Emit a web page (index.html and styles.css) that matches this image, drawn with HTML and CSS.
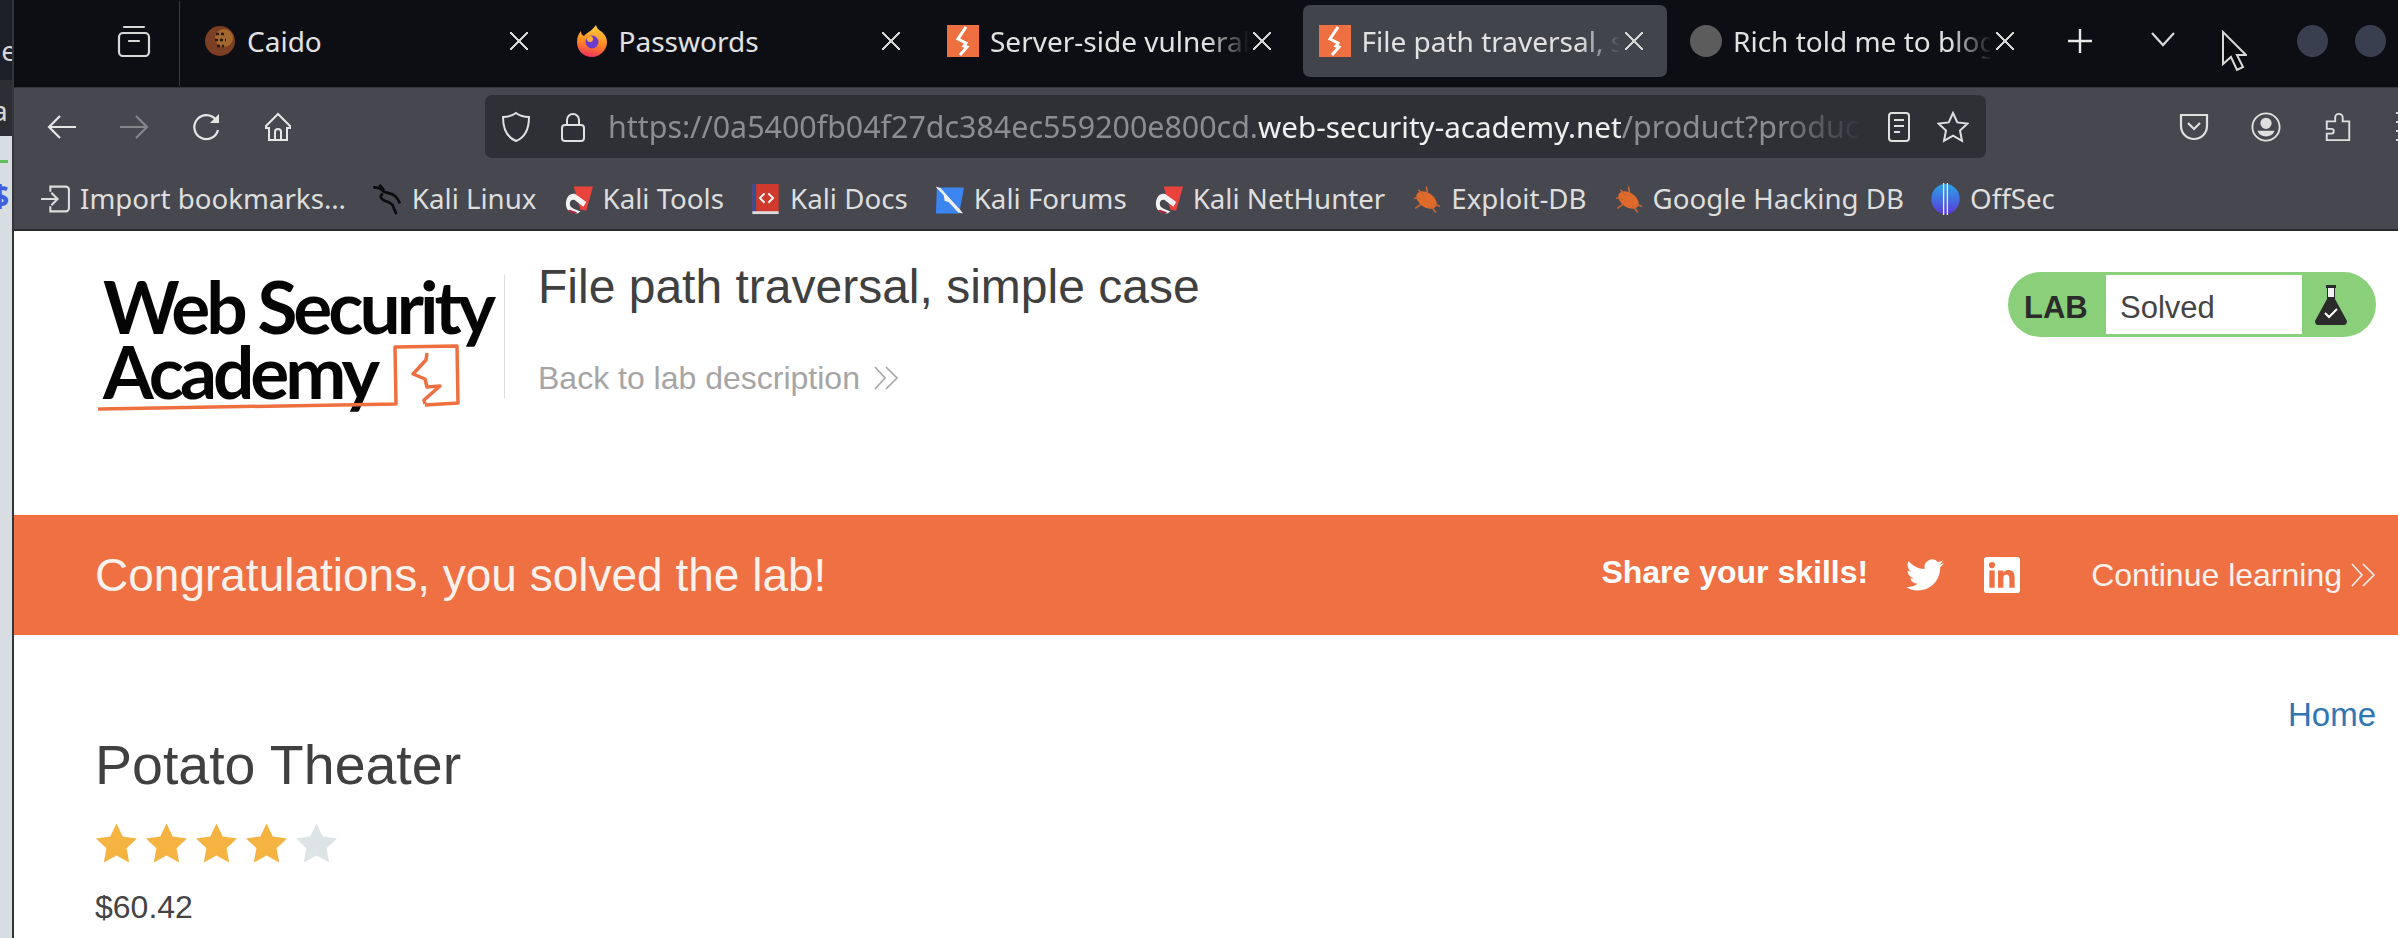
FILE: index.html
```html
<!DOCTYPE html>
<html lang="en">

<head>
    <meta charset="UTF-8">
    <title>File path traversal, simple case</title>
    <link rel="stylesheet" href="styles.css">
</head>

<body>
    <svg class="sprites" width="0" height="0">
        <symbol id="burp" viewBox="0 0 32 32">
            <rect width="32" height="32" fill="#ee7040" />
            <path d="M19 2l-8 12 8 4-2 3 3 1-7 8" fill="none" stroke="#fff" stroke-width="3" />
        </symbol>
        <symbol id="kalired" viewBox="0 0 32 32">
            <path d="M11 3l20 0-7 25-6-1z" fill="#e8433d" />
            <path d="M3 21c0-8 5-12 10-10l11 8-3 5-9-7c-3-1-5 1-5 4 0 3 2 4 4 5l7 3-3 2-6-1c-4-1-6-5-6-9z" fill="#f2f2f2" />
            <path d="M5 28l5 3 5-1-8-3z" fill="#a8243d" />
        </symbol>
        <symbol id="bug" viewBox="0 0 30 30">
            <ellipse cx="15" cy="16" rx="11" ry="7" fill="#e06a2c" transform="rotate(35 15 16)" />
            <path d="M7 6l6 6M3 14l7 1M4 24l6-4M24 28l-5-7M15 3l1 7M28 22l-6-2" stroke="#c9682f" stroke-width="1.5" />
        </symbol>
        <symbol id="chevrons" viewBox="0 0 26 26">
            <path d="M2 2l10 11L2 24M13 2l11 11-11 11" fill="none" stroke="currentColor" stroke-width="1.6" />
        </symbol>
        <symbol id="star" viewBox="0 0 42 40">
            <path d="M21 0l6.4 13.4L42 15.3 31.3 25.4 34 40 21 32.9 8 40l2.7-14.6L0 15.3l14.6-1.9z" fill="currentColor" />
        </symbol>
    </svg>

    <div class="desktop-edge">
        <div class="edge-dark"><span>le</span></div>
        <div class="edge-mid"><span>a</span></div>
        <div class="edge-light">
            <div class="edge-green"></div>
            <span>$</span>
        </div>
    </div>

    <div class="browser">
        <div class="tabbar">
            <svg class="tabs-list" viewBox="0 0 34 32" fill="none" stroke="#d8d8d8" stroke-width="2.2">
                <rect x="2" y="8" width="30" height="23" rx="4" />
                <path d="M7 2h20M12 16h10" stroke-linecap="round" />
            </svg>
            <div class="tab-divider"></div>

            <div class="tab">
                <svg class="favicon" viewBox="0 0 32 32">
                    <circle cx="16" cy="16" r="15" fill="#7b3f25" />
                    <circle cx="20" cy="13" r="9" fill="#a4672f" />
                    <path d="M12 9h9M11 15h11M13 21h7" stroke="#2b1a12" stroke-width="2.5" stroke-dasharray="3 2" />
                </svg>
                <span class="tab-title">Caido</span>
                <span class="tab-close"></span>
            </div>
            <div class="tab">
                <svg class="favicon" viewBox="0 0 32 32">
                    <defs>
                        <linearGradient id="fox" x1="0.6" y1="0" x2="0.4" y2="1">
                            <stop offset="0" stop-color="#ffd23f" />
                            <stop offset="0.55" stop-color="#ff8a1f" />
                            <stop offset="1" stop-color="#f0325f" />
                        </linearGradient>
                    </defs>
                    <path d="M20 0c1 4 3 5 6 7 4 4 5 7 5 10 0 8-7 15-15 15S1 26 1 17c0-4 1-8 4-11 0 3 1 4 3 5 2-3 7-4 12-11z" fill="url(#fox)" />
                    <circle cx="16" cy="17" r="6.5" fill="#6d3bd0" />
                    <circle cx="14" cy="14" r="3" fill="#ffb02e" />
                </svg>
                <span class="tab-title">Passwords</span>
                <span class="tab-close"></span>
            </div>
            <div class="tab">
                <svg class="favicon"><use href="#burp" /></svg>
                <span class="tab-title fade">Server-side vulnerabilities</span>
                <span class="tab-close"></span>
            </div>
            <div class="tab active">
                <svg class="favicon"><use href="#burp" /></svg>
                <span class="tab-title fade">File path traversal, simple case</span>
                <span class="tab-close"></span>
            </div>
            <div class="tab">
                <span class="favicon favicon-grey"></span>
                <span class="tab-title fade">Rich told me to blog about it</span>
                <span class="tab-close"></span>
            </div>

            <svg class="tab-plus" viewBox="0 0 26 26" stroke="#e8e8e8" stroke-width="2.4">
                <path d="M13 1v24M1 13h24" />
            </svg>
            <svg class="tab-more" viewBox="0 0 26 16" fill="none" stroke="#d8d8d8" stroke-width="2.2">
                <path d="M2 2l11 12L24 2" />
            </svg>
            <div class="win-buttons">
                <span class="win-dot"></span>
                <span class="win-dot"></span>
            </div>
            <svg class="cursor" viewBox="0 0 26 42">
                <path d="M2 2v32l8-7 6 13 6-3-6-12h9z" fill="#0a0a0c" stroke="#d8d8d8" stroke-width="2" />
            </svg>
        </div>

        <div class="toolbar">
            <div class="nav-buttons">
                <svg class="tool-icon" viewBox="0 0 30 30" fill="none" stroke="#e6e6e6" stroke-width="2.2">
                    <path d="M29 15H3M13 4L2 15l11 11" />
                </svg>
                <svg class="tool-icon" viewBox="0 0 30 30" fill="none" stroke="#85868a" stroke-width="2.2">
                    <path d="M1 15h26M17 4l11 11-11 11" />
                </svg>
                <svg class="tool-icon" viewBox="0 0 30 30" fill="none" stroke="#e6e6e6" stroke-width="2.2">
                    <path d="M25 8A12 12 0 1 0 27 18" />
                    <path d="M28 2v9h-9z" fill="#e6e6e6" stroke="none" />
                </svg>
                <svg class="tool-icon" viewBox="0 0 30 30" fill="none" stroke="#e6e6e6" stroke-width="2">
                    <path d="M15 2L3 14v2h3v12h18V16h3v-2zM12 28v-8a3 3 0 0 1 6 0v8" />
                </svg>
            </div>
            <div class="urlbar">
                <svg class="url-icon" viewBox="0 0 30 32" fill="none" stroke="#e0e0e0" stroke-width="2">
                    <path d="M15 2c4 3 8 4 13 4 0 11-3 20-13 24C5 26 2 17 2 6c5 0 9-1 13-4z" />
                </svg>
                <svg class="url-icon lock" viewBox="0 0 26 32" fill="none" stroke="#e0e0e0" stroke-width="2">
                    <rect x="2" y="14" width="22" height="16" rx="3" />
                    <path d="M7 14V9a6 6 0 0 1 12 0v5" />
                </svg>
                <div class="url-text">
                    <span class="url-dim">https://0a5400fb04f27dc384ec559200e800cd.</span><span class="url-domain">web-security-academy.net</span><span class="url-dim">/product?productId=1</span>
                </div>
                <svg class="url-icon reader" viewBox="0 0 24 32" fill="none" stroke="#e0e0e0" stroke-width="2">
                    <rect x="2" y="2" width="20" height="28" rx="3" />
                    <path d="M7 9h10M7 15h10M7 21h6" />
                </svg>
                <svg class="url-icon star" viewBox="0 0 32 32" fill="none" stroke="#e0e0e0" stroke-width="2">
                    <path d="M16 2l4.3 9.4 10.2 1.2-7.5 7 2 10.2L16 24.6 7 29.8l2-10.2-7.5-7 10.2-1.2z" />
                </svg>
            </div>
            <div class="tool-right">
                <svg class="tool-icon" viewBox="0 0 30 30" fill="none" stroke="#e0e0e0" stroke-width="2.2">
                    <path d="M2 3h26v11a13 13 0 0 1-26 0zM9 11l6 6 6-6" />
                </svg>
                <svg class="tool-icon" viewBox="0 0 32 32" fill="none" stroke="#e0e0e0" stroke-width="2">
                    <circle cx="16" cy="16" r="14.5" />
                    <circle cx="16" cy="12" r="5" fill="#e0e0e0" />
                    <path d="M7 20h18c-1 4-5 6-9 6s-8-2-9-6z" fill="#e0e0e0" stroke="none" />
                </svg>
                <svg class="tool-icon" viewBox="0 0 30 32" fill="none" stroke="#e0e0e0" stroke-width="2">
                    <path d="M3 30h24V10h-7V6a4 4 0 0 0-8 0v4H3v8h5a2.5 2.5 0 0 1 0 5H3z" />
                </svg>
                <div class="tool-menu"></div>
            </div>
        </div>

        <div class="bookmarks">
            <div class="bookmark">
                <svg class="bm-icon" viewBox="0 0 30 30" fill="none" stroke="#dcdcdc" stroke-width="2">
                    <path d="M10 8V3h15a3 3 0 0 1 3 3v18a3 3 0 0 1-3 3H10v-5M1 15h15M11 9l6 6-6 6" />
                </svg>
                Import bookmarks…
            </div>
            <div class="bookmark">
                <svg class="bm-icon" viewBox="0 0 34 36" fill="none" stroke="#0b0b0d" stroke-width="3">
                    <path d="M1 5c6 0 9 1 11 4 3 3 9 1 14 6 3 3 4 6 5 8M8 2l5 6M12 12c-4 2-3 6 2 8 6 2 10 5 10 8l3 7" />
                </svg>
                Kali Linux
            </div>
            <div class="bookmark">
                <svg class="bm-icon"><use href="#kalired" /></svg>
                Kali Tools
            </div>
            <div class="bookmark">
                <svg class="bm-icon" viewBox="0 0 30 34">
                    <rect x="1" y="1" width="28" height="30" rx="1" fill="#d03a2c" />
                    <rect x="1" y="1" width="4" height="30" fill="#2e4f9c" />
                    <rect x="1" y="30" width="28" height="3" fill="#dcdcdc" />
                    <path d="M14 11l-5 5 5 5M18 11l5 5-5 5" fill="none" stroke="#fff" stroke-width="2" />
                </svg>
                Kali Docs
            </div>
            <div class="bookmark">
                <svg class="bm-icon" viewBox="0 0 32 32">
                    <path d="M3 4h28l-5 27H2z" fill="#3a85f0" />
                    <path d="M2 3l5 2 8 9 12 13 3 4-5-1-10-11-4-1-1-6-7-7z" fill="#efefef" />
                </svg>
                Kali Forums
            </div>
            <div class="bookmark">
                <svg class="bm-icon"><use href="#kalired" /></svg>
                Kali NetHunter
            </div>
            <div class="bookmark">
                <svg class="bm-icon"><use href="#bug" /></svg>
                Exploit-DB
            </div>
            <div class="bookmark">
                <svg class="bm-icon"><use href="#bug" /></svg>
                Google Hacking DB
            </div>
            <div class="bookmark">
                <svg class="bm-icon" viewBox="0 0 30 34">
                    <defs>
                        <linearGradient id="offsec" x1="0" y1="0" x2="0" y2="1">
                            <stop offset="0" stop-color="#2aa4e8" />
                            <stop offset="1" stop-color="#5a3bd8" />
                        </linearGradient>
                    </defs>
                    <ellipse cx="15" cy="17" rx="15" ry="16" fill="url(#offsec)" />
                    <path d="M13 0v34M17 0v34" stroke="#e8e8e8" stroke-width="1.4" />
                </svg>
                OffSec
            </div>
        </div>

        <div class="page">
            <header class="lab-header">
                <div class="logo">
                    <div class="logo-text">Web Security<br>Academy</div>
                    <svg class="logo-mark" viewBox="90 270 410 150" fill="none" stroke="#ee7040" stroke-width="3.5">
                        <path d="M98 409c100-1 200-3 298-5l-1-57 62-1 1 57-33 2" stroke-linejoin="round" />
                        <path d="M427 353l-1 7-13 14 12 5 2 8 13-1-16 14 1 4" stroke-linejoin="round" />
                    </svg>
                </div>
                <div class="lab-title">
                    <h2>File path traversal, simple case</h2>
                    <a class="back-link" href="#">Back to lab description
                        <svg class="chevrons"><use href="#chevrons" /></svg>
                    </a>
                </div>
                <div class="lab-status">
                    <span class="status-tag">LAB</span>
                    <span class="status-text">Solved</span>
                    <span class="status-icon">
                        <svg viewBox="0 0 32 40">
                            <path d="M11 0h10v3h-1v11l12 22c0 2-1 4-3 4H3c-2 0-3-2-3-4l12-22V3h-1z" fill="#2b2b2b" />
                            <rect x="13" y="3" width="6" height="9" fill="#f2f2f2" />
                            <path d="M10 28l4 4 8-8" fill="none" stroke="#fff" stroke-width="2" />
                        </svg>
                    </span>
                </div>
            </header>

            <section class="solved-banner">
                <h4>Congratulations, you solved the lab!</h4>
                <div class="share">
                    <span class="share-label">Share your skills!</span>
                    <svg class="share-twitter" viewBox="0 0 24 24" fill="#fff">
                        <path d="M23.953 4.57a10 10 0 01-2.825.775 4.958 4.958 0 002.163-2.723c-.951.555-2.005.959-3.127 1.184a4.92 4.92 0 00-8.384 4.482C7.69 8.095 4.067 6.13 1.64 3.162a4.822 4.822 0 00-.666 2.475c0 1.71.87 3.213 2.188 4.096a4.904 4.904 0 01-2.228-.616v.06a4.923 4.923 0 003.946 4.827 4.996 4.996 0 01-2.212.085 4.936 4.936 0 004.604 3.417 9.867 9.867 0 01-6.102 2.105c-.39 0-.779-.023-1.17-.067a13.995 13.995 0 007.557 2.209c9.053 0 13.998-7.496 13.998-13.985 0-.21 0-.42-.015-.63A9.935 9.935 0 0024 4.59z" />
                    </svg>
                    <svg class="share-linkedin" viewBox="0 0 24 24" fill="#fff">
                        <path d="M20.447 20.452h-3.554v-5.569c0-1.328-.027-3.037-1.852-3.037-1.853 0-2.136 1.445-2.136 2.939v5.667H9.351V9h3.414v1.561h.046c.477-.9 1.637-1.85 3.37-1.85 3.601 0 4.267 2.37 4.267 5.455v6.286zM5.337 7.433a2.062 2.062 0 01-2.063-2.065 2.064 2.064 0 112.063 2.065zm1.782 13.019H3.555V9h3.564v11.452zM22.225 0H1.771C.792 0 0 .774 0 1.729v20.542C0 23.227.792 24 1.771 24h20.451C23.2 24 24 23.227 24 22.271V1.729C24 .774 23.2 0 22.222 0h.003z" />
                    </svg>
                </div>
                <a class="continue-link" href="#">Continue learning
                    <svg class="chevrons"><use href="#chevrons" /></svg>
                </a>
            </section>

            <section class="product">
                <div class="product-nav"><a href="#">Home</a></div>
                <h3>Potato Theater</h3>
                <div class="rating">
                    <svg class="star-on"><use href="#star" /></svg>
                    <svg class="star-on"><use href="#star" /></svg>
                    <svg class="star-on"><use href="#star" /></svg>
                    <svg class="star-on"><use href="#star" /></svg>
                    <svg class="star-off"><use href="#star" /></svg>
                </div>
                <div class="price">$60.42</div>
            </section>
        </div>
    </div>
</body>

</html>
```

FILE: styles.css
```css
html,
body {
    margin: 0;
    height: 100%;
    overflow: hidden;
}

body {
    display: flex;
    background: #2b2d33;
    font-family: 'Noto Sans', sans-serif;
    position: relative;
}

.sprites {
    position: absolute;
}

/* the window behind the browser */
.desktop-edge {
    width: 12px;
    flex: none;
    display: flex;
    flex-direction: column;
    overflow: hidden;
    font-size: 28px;
    color: #d8d8d8;
    line-height: 1;
}

.edge-dark {
    height: 80px;
    background: #1d2029;
    box-sizing: border-box;
    padding-top: 36px;
    white-space: nowrap;
    text-indent: -6px;
}

.edge-mid {
    height: 56px;
    background: #2d2e33;
    box-sizing: border-box;
    padding-top: 16px;
    text-indent: -8px;
}

.edge-light {
    flex: 1;
    background: #d8dde2;
}

.edge-green {
    height: 3px;
    width: 8px;
    margin-top: 24px;
    background: #5fbf5a;
}

.edge-light span {
    display: block;
    margin-top: 18px;
    margin-left: -8px;
    color: #3f5fe0;
    font-weight: bold;
    font-size: 30px;
}

.browser {
    flex: 1;
    min-width: 0;
    display: flex;
    flex-direction: column;
    border-left: 2px solid #33353b;
    position: relative;
}

/* tabs */
.tabbar {
    height: 87px;
    flex: none;
    display: flex;
    align-items: center;
    background: #0d0e13;
    box-sizing: border-box;
    padding-left: 103px;
    color: #e2e2e2;
    font-size: 28px;
}

.tabs-list {
    width: 34px;
    height: 32px;
    flex: none;
    margin-top: -6px;
}

.tab-divider {
    width: 1px;
    height: 85px;
    background: #3a3b40;
    margin: 0 10px 0 28px;
    flex: none;
}

.tab {
    width: 364px;
    height: 72px;
    flex: none;
    margin-right: 7.5px;
    margin-top: -5px;
    display: flex;
    align-items: center;
    box-sizing: border-box;
    padding: 0 25px 0 14px;
    border-radius: 7px;
}

.tab.active {
    background: #42444b;
    margin-left: -2px;
    margin-right: 9.5px;
    padding: 0 23px 0 16px;
}

.favicon {
    width: 32px;
    height: 32px;
    flex: none;
}

.favicon-grey {
    border-radius: 50%;
    background: #5c5c5c;
}

.tab-title {
    flex: 1;
    min-width: 0;
    margin: 0 4px 0 11px;
    white-space: nowrap;
    overflow: hidden;
}

.tab-title.fade {
    -webkit-mask-image: linear-gradient(to right, #000 84%, transparent 100%);
    mask-image: linear-gradient(to right, #000 84%, transparent 100%);
}

.tab-close {
    width: 18px;
    height: 18px;
    flex: none;
    margin-right: 1px;
    background:
        linear-gradient(45deg, transparent 46%, #d4d4d4 46%, #d4d4d4 54%, transparent 54%),
        linear-gradient(-45deg, transparent 46%, #d4d4d4 46%, #d4d4d4 54%, transparent 54%);
}

.tab-plus {
    width: 26px;
    height: 26px;
    flex: none;
    margin-left: 19px;
    margin-top: -5px;
}

.tab-more {
    width: 26px;
    height: 16px;
    flex: none;
    margin-left: 57px;
    margin-top: -9px;
}

.win-buttons {
    display: flex;
    gap: 27px;
    margin-left: auto;
    margin-right: 12px;
    margin-top: -5px;
}

.win-dot {
    width: 31px;
    height: 32px;
    border-radius: 50%;
    background: #3a3f50;
}

.cursor {
    position: absolute;
    left: 2207px;
    top: 30px;
    width: 26px;
    height: 42px;
}

/* navigation row */
.toolbar {
    height: 80px;
    flex: none;
    display: flex;
    align-items: center;
    background: #47484f;
    border-top: 1px solid #34353a;
    box-sizing: border-box;
    padding: 7px 0 9px 33px;
    overflow: hidden;
}

.nav-buttons {
    display: flex;
    gap: 42px;
    flex: none;
}

.tool-icon {
    width: 30px;
    height: 30px;
    flex: none;
}

.urlbar {
    width: 1501px;
    height: 63px;
    flex: none;
    margin-left: 192px;
    display: flex;
    align-items: center;
    background: #2f3036;
    border-radius: 7px;
    box-sizing: border-box;
    padding-left: 16px;
}

.url-icon {
    width: 30px;
    height: 32px;
    flex: none;
}

.url-icon.lock {
    width: 26px;
    margin-left: 29px;
}

.url-text {
    width: 1255px;
    flex: none;
    margin-left: 22px;
    white-space: nowrap;
    overflow: hidden;
    -webkit-mask-image: linear-gradient(to right, #000 93%, transparent 100%);
    mask-image: linear-gradient(to right, #000 93%, transparent 100%);
}

.url-dim {
    color: #8c8d91;
    font-size: 30.4px;
}

.url-domain {
    color: #f0f0f0;
    font-size: 29.6px;
}

.url-icon.reader {
    width: 24px;
    margin-left: 24px;
}

.url-icon.star {
    width: 32px;
    margin-left: 26px;
}

.tool-right {
    display: flex;
    gap: 42px;
    margin-left: 193px;
    flex: none;
}

.tool-menu {
    width: 20px;
    height: 30px;
    background: repeating-linear-gradient(to bottom, #d8d8d8 0 2px, transparent 2px 9px);
    margin-left: 1px;
}

/* bookmarks */
.bookmarks {
    height: 64px;
    flex: none;
    display: flex;
    align-items: center;
    background: #47484f;
    box-sizing: border-box;
    padding: 2px 0 0 26px;
    color: #dedede;
    font-size: 27.7px;
    border-bottom: 2px solid #2a2a2e;
    gap: 26px;
}

.bookmark {
    display: flex;
    align-items: center;
    gap: 9px;
    white-space: nowrap;
    line-height: 1.2;
}

.bm-icon {
    width: 31px;
    height: 32px;
    flex: none;
}

/* page */
.page {
    flex: 1;
    background: #fff;
    font-family: 'Liberation Sans', Arial, sans-serif;
    color: #333;
    overflow: hidden;
}

.lab-header {
    height: 284px;
    box-sizing: border-box;
    display: flex;
    align-items: flex-start;
    padding: 30px 22px 0 81px;
}

.logo {
    width: 410px;
    height: 123px;
    flex: none;
    box-sizing: border-box;
    margin-top: 14px;
    border-right: 1px solid #ddd;
    position: relative;
}

.logo-text {
    font-family: Lato, sans-serif;
    font-weight: 700;
    font-size: 73px;
    line-height: 65px;
    letter-spacing: -4px;
    color: #050505;
    margin-left: 8px;
    margin-top: -1px;
    white-space: nowrap;
}

.logo-mark {
    position: absolute;
    left: -5px;
    top: -5px;
    width: 410px;
    height: 150px;
}

.lab-title {
    margin-left: 33px;
}

.lab-title h2 {
    margin: 0;
    font-size: 48px;
    line-height: 52px;
    font-weight: 400;
    color: #404040;
}

.back-link {
    display: flex;
    align-items: center;
    gap: 13px;
    margin-top: 47px;
    font-size: 32px;
    line-height: 36px;
    color: #a5a5a5;
    text-decoration: none;
}

.chevrons {
    width: 26px;
    height: 26px;
    flex: none;
}

.lab-status {
    width: 368px;
    height: 65px;
    flex: none;
    margin-left: auto;
    margin-top: 11px;
    display: flex;
    align-items: center;
    background: #8ad07a;
    border-radius: 33px;
    box-sizing: border-box;
    font-size: 31px;
}

.status-tag {
    width: 98px;
    flex: none;
    box-sizing: border-box;
    padding: 7px 0 0 16px;
    font-weight: bold;
    color: #2b2b2b;
}

.status-text {
    width: 196px;
    height: 59px;
    flex: none;
    box-sizing: border-box;
    padding-left: 14px;
    line-height: 65px;
    background: #fff;
    color: #444;
}

.status-icon {
    flex: 1;
    display: flex;
    justify-content: center;
    margin-right: 16px;
}

.status-icon svg {
    width: 32px;
    height: 40px;
}

.solved-banner {
    height: 120px;
    box-sizing: border-box;
    display: flex;
    align-items: center;
    padding: 0 22px 0 81px;
    background: #ee7043;
    color: #fff;
}

.solved-banner h4 {
    margin: 0;
    font-size: 46px;
    font-weight: 400;
    color: #fdf1ec;
}

.share {
    margin-left: auto;
    display: flex;
    align-items: center;
}

.share-label {
    font-size: 32px;
    font-weight: bold;
    margin-top: -6px;
}

.share-twitter {
    width: 38px;
    height: 38px;
    margin-left: 38px;
}

.share-linkedin {
    width: 36px;
    height: 36px;
    margin-left: 40px;
}

.continue-link {
    margin-left: 71px;
    display: flex;
    align-items: center;
    gap: 8px;
    font-size: 32px;
    color: #fdf1ec;
    text-decoration: none;
}

.product {
    padding: 63px 22px 0 81px;
}

.product-nav {
    text-align: right;
    font-size: 33px;
    line-height: 34px;
}

.product-nav a {
    color: #2f76b5;
    text-decoration: none;
}

.product h3 {
    margin: 3px 0 0;
    font-size: 55.5px;
    line-height: 60px;
    font-weight: 400;
    color: #404040;
}

.rating {
    display: flex;
    gap: 9px;
    margin: 28px 0 0 1px;
}

.rating svg {
    width: 41px;
    height: 40px;
}

.star-on {
    color: #f5b342;
}

.star-off {
    color: #dde4e6;
}

.price {
    margin-top: 24px;
    font-size: 32px;
    line-height: 40px;
    color: #444;
}
```
